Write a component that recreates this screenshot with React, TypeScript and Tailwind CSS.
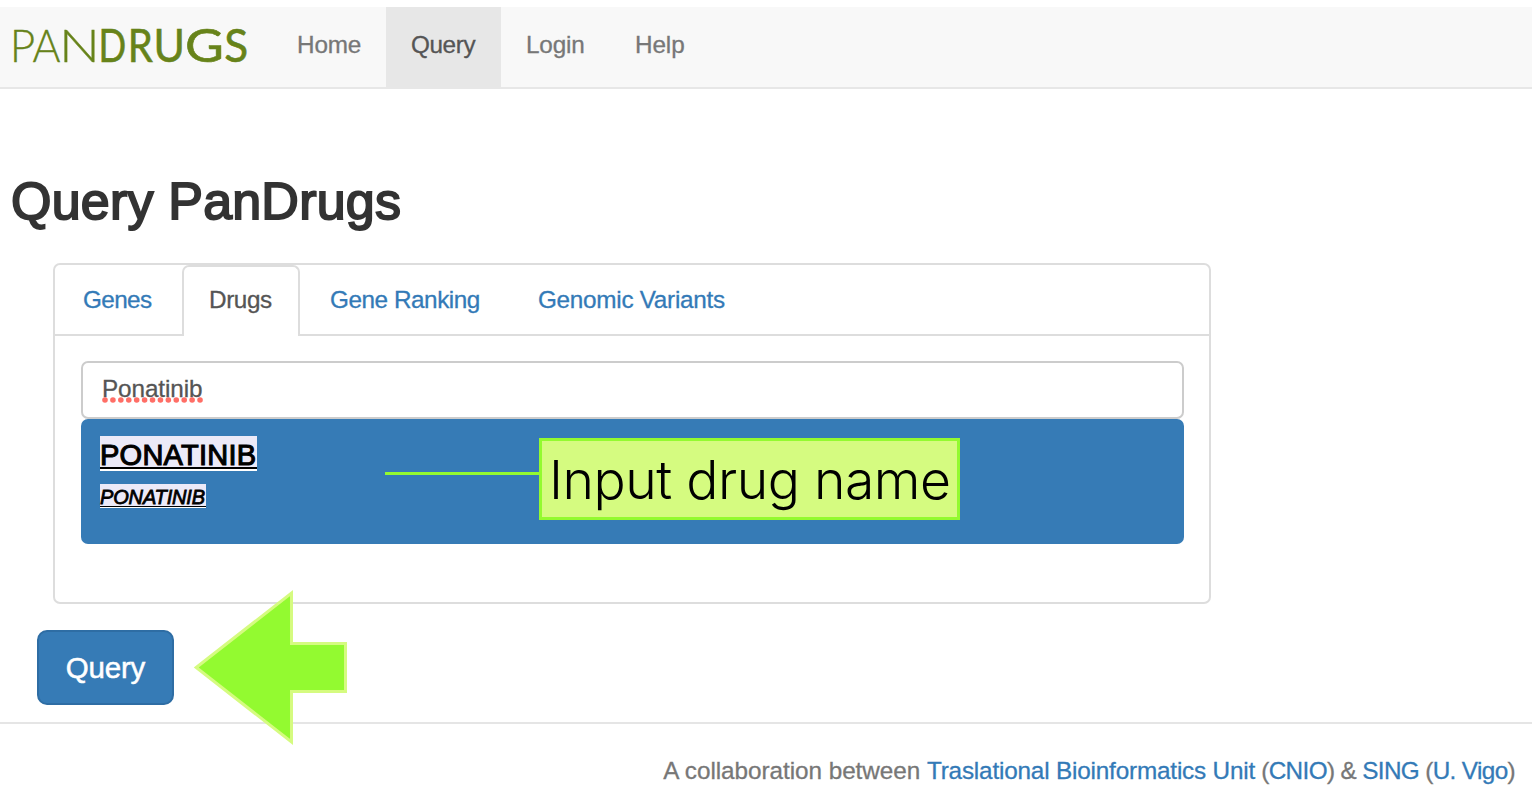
import React from "react";

const navItems = [
  { label: "Home", box: "w-[115px] pl-[26px] text-[#777]", track: "tracking-[-0.15px]" },
  { label: "Query", box: "w-[115px] pl-[25px] text-[#555] bg-[#e7e7e7]", track: "tracking-[-0.4px]" },
  { label: "Login", box: "w-[109px] pl-[25px] text-[#777]", track: "tracking-[-0.2px]" },
  { label: "Help", box: "w-[100px] pl-[25px] text-[#777]", track: "tracking-[-0.1px]" },
];

const logoLetters = [
  { ch: "P", x: 9.8, stretch: 0.97, bold: false },
  { ch: "A", x: 32.5, stretch: 0.94, bold: false },
  { ch: "N", x: 58.9, stretch: 1.19, bold: false },
  { ch: "D", x: 98.6, stretch: 0.8, bold: true },
  { ch: "R", x: 127.8, stretch: 0.88, bold: true },
  { ch: "U", x: 153.4, stretch: 0.94, bold: true },
  { ch: "G", x: 185, stretch: 1.17, bold: true },
  { ch: "S", x: 224.3, stretch: 0.97, bold: true },
];

function Logo() {
  return (
    <svg className="block h-[80px] w-[271px]" viewBox="0 0 271 80" role="img" aria-label="PANDRUGS">
      {logoLetters.map((l) => (
        <text
          key={l.ch}
          transform={`translate(${l.x} 55) scale(${l.stretch} 1)`}
          fontFamily="Lato"
          fontSize="45.5"
          fontWeight={l.bold ? 400 : 300}
          fill="#67831a"
          stroke="#67831a"
          strokeWidth={l.bold ? 0.6 : 0.3}
        >
          {l.ch}
        </text>
      ))}
    </svg>
  );
}

function Navbar() {
  return (
    <nav className="mt-[7px] flex h-[82px] border-b-2 border-[#e7e7e7] bg-[#f8f8f8]">
      <Logo />
      {navItems.map((n) => (
        <a key={n.label} className={`flex h-[80px] items-center pb-[4px] ${n.box}`}>
          <span className={n.track}>{n.label}</span>
        </a>
      ))}
    </nav>
  );
}

function Tabs() {
  return (
    <div className="flex h-[71px] text-[#337ab7]">
      <div className="w-[127px] border-b-2 border-[#ddd] pl-[28px] leading-[70px] tracking-[-0.6px]">Genes</div>
      <div className="w-[118px] rounded-t-[7px] border-2 border-b-0 border-[#ddd] pl-[25px] leading-[66px] tracking-[-0.4px] text-[#555]">
        Drugs
      </div>
      <div className="w-[208px] border-b-2 border-[#ddd] pl-[30px] leading-[70px] tracking-[-0.45px]">Gene Ranking</div>
      <div className="flex-1 border-b-2 border-[#ddd] pl-[30px] leading-[70px] tracking-[-0.28px]">Genomic Variants</div>
    </div>
  );
}

function Callout() {
  return (
    <div className="absolute top-[19px] left-[304px] flex">
      <div className="mt-[34px] h-[3px] w-[154px] bg-[#93fa30]" />
      <div className="flex h-[82px] w-[421px] items-center border-[3px] border-[#93fa30] bg-[#d5fb80] pt-[1px] pl-[7px] font-['Inter'] text-[53.5px] leading-none font-light whitespace-nowrap text-black [-webkit-text-stroke:0px]">
        <span className="tracking-[-0.5px]">Input drug name</span>
      </div>
    </div>
  );
}

function Squiggle() {
  return (
    <svg className="absolute top-[34px] left-[19px]" width="102" height="6" viewBox="0 0 102 6">
      {Array.from({ length: 13 }, (_, i) => (
        <circle key={i} cx={3 + i * 7.92} cy="3" r="2.8" fill="#ff4a40" fillOpacity="0.8" />
      ))}
    </svg>
  );
}

function Panel() {
  return (
    <section className="ml-[53px] h-[341px] w-[1158px] rounded-[7px] border-2 border-[#ddd]">
      <Tabs />
      <div className="pt-[25px] pr-[25px] pl-[26px]">
        <div className="relative h-[58px] rounded-[7px] border-2 border-[#ccc] pl-[19px] leading-[52px] tracking-[-0.1px] text-[#555]">
          Ponatinib
          <Squiggle />
        </div>
        <div className="relative flex h-[125px] flex-col items-start rounded-[7px] bg-[#367bb6] pt-[17px] pl-[19px] text-black">
          <div className="h-[35px] w-[157px] border-b-2 border-white bg-[#eceaf8]">
            <div className="h-[33px] border-b-2 border-black text-[29px] leading-[38px] tracking-[0.25px] [-webkit-text-stroke:1.1px_black]">
              PONATINIB
            </div>
          </div>
          <div className="mt-[13px] h-[24px] w-[106px] border-b border-white bg-[#eceaf8]">
            <div className="h-[23px] border-b border-black text-[20px] leading-[26px] tracking-[-0.15px] italic [-webkit-text-stroke:0.8px_black]">
              PONATINIB
            </div>
          </div>
          <Callout />
        </div>
      </div>
    </section>
  );
}

function Arrow() {
  return (
    <svg className="absolute top-[-41px] left-[193px]" width="156" height="158" viewBox="0 0 156 158">
      <path
        d="M3.2 78.5 98.5 4V54.5H152.5V102.5H98.5V153Z"
        fill="#93fa30"
        stroke="#d5fb80"
        strokeWidth="3"
      />
    </svg>
  );
}

export default function App() {
  return (
    <div className="flex h-[798px] w-[1532px] flex-col overflow-hidden bg-white font-['Liberation_Sans',Arial,sans-serif] text-[24.3px] [-webkit-text-stroke:0.3px_currentColor]">
      <Navbar />
      <h1 className="mt-[82px] h-[92px] pl-[11px] text-[52px] leading-[60px] tracking-[0.2px] text-[#333] [-webkit-text-stroke:1.9px_#333]">
        Query PanDrugs
      </h1>
      <Panel />
      <div className="relative mt-[26px] h-[92px] pl-[37px]">
        <button className="block h-[75px] w-[137px] rounded-[10px] border-2 border-[#2e6da4] bg-[#367bb6] pt-[2px] text-[29.5px] tracking-[-0.2px] text-white [-webkit-text-stroke:0.5px_white]">
          Query
        </button>
        <Arrow />
      </div>
      <footer className="flex h-[76px] justify-end border-t-2 border-[#e5e5e5] pt-[31px] pr-[17px] leading-[32px] text-[#777]">
        <p className="tracking-[-0.63px] whitespace-nowrap">
          <span className="tracking-[-0.05px]">A collaboration between </span>
          <a className="tracking-[-0.18px] text-[#337ab7]">Traslational Bioinformatics Unit</a> (
          <a className="text-[#337ab7]">CNIO</a>) &amp; <a className="text-[#337ab7]">SING</a> (
          <a className="text-[#337ab7]">U. Vigo</a>)
        </p>
      </footer>
    </div>
  );
}
